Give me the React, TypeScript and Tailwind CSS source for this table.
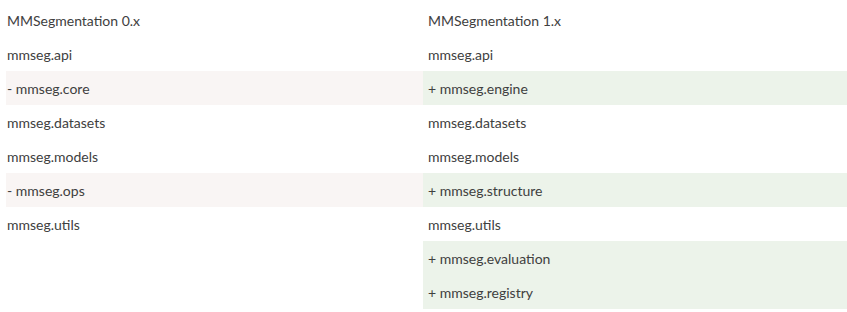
const rows: [string, string, boolean, boolean][] = [
  ["MMSegmentation 0.x", "MMSegmentation 1.x", false, false],
  ["mmseg.api", "mmseg.api", false, false],
  ["- mmseg.core", "+ mmseg.engine", true, true],
  ["mmseg.datasets", "mmseg.datasets", false, false],
  ["mmseg.models", "mmseg.models", false, false],
  ["- mmseg.ops", "+ mmseg.structure", true, true],
  ["mmseg.utils", "mmseg.utils", false, false],
  ["", "+ mmseg.evaluation", false, true],
  ["", "+ mmseg.registry", false, true],
];

const App = () => {
  return (
    <div className="w-[847px] h-[312px] bg-white pt-[3px] pl-[6px] text-[14px] text-[#404040] font-['Lato','Open_Sans',sans-serif]">
      <div className="grid grid-cols-[417px_424px]">
        {rows.map(([l, r, lHi, rHi], i) => (
          <div key={i} className="contents">
            <div className={`h-[34px] flex items-center pl-px ${lHi ? "bg-[#f9f5f4]" : ""}`}>{l}</div>
            <div className={`h-[34px] flex items-center pl-[5px] ${rHi ? "bg-[#ecf3ea]" : ""}`}>{r}</div>
          </div>
        ))}
      </div>
    </div>
  );
};

export default App;
